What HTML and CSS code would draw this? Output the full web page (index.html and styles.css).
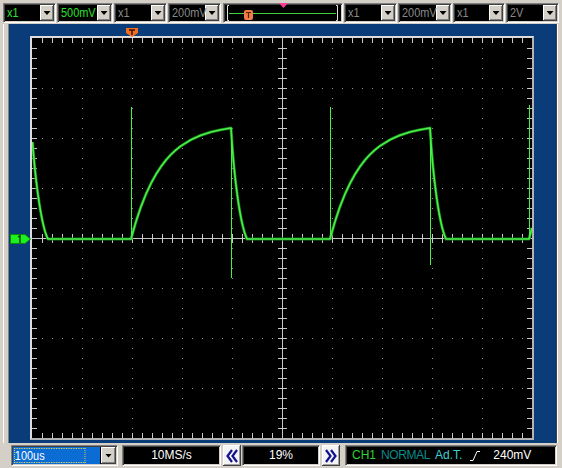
FILE: index.html
```html
<!DOCTYPE html>
<html lang="en">
<head>
    <meta charset="UTF-8">
    <title>Scope</title>
    <link rel="stylesheet" href="styles.css">
</head>
<body>
<div class="app">
    <div class="toolbar">
        <div class="combo w53"><span class="field on"><span>x1</span></span><span class="drop"></span></div>
        <div class="combo w55"><span class="field on"><span>500mV</span></span><span class="drop"></span></div>
        <div class="combo w53"><span class="field"><span>x1</span></span><span class="drop"></span></div>
        <div class="combo w53"><span class="field"><span>200mV</span></span><span class="drop"></span></div>

        <div class="trigbar">
            <svg width="118" height="18" viewBox="0 0 118 18">
                <path d="M5 1.5H3.5V16.5H5" fill="none" stroke="#e0e0e0"/>
                <path d="M112 1.5H113.5V16.5H112" fill="none" stroke="#e0e0e0"/>
                <path d="M5 9.5H112" stroke="#3fd23f"/>
                <rect x="20" y="6" width="9" height="10" rx="2" fill="#f07a48"/>
                <path d="M22 8.5H27M24.5 8.5V14" stroke="#5a2008" stroke-width="1.2"/>
                <polygon points="55,-1 64,-1 59.5,4" fill="#ff3c9c"/>
            </svg>
        </div>

        <div class="combo w53"><span class="field"><span>x1</span></span><span class="drop"></span></div>
        <div class="combo w54"><span class="field"><span>200mV</span></span><span class="drop"></span></div>
        <div class="combo w52"><span class="field"><span>x1</span></span><span class="drop"></span></div>
        <div class="combo w53"><span class="field"><span>2V</span></span><span class="drop"></span></div>
    </div>

    <div class="middle">
        <div class="gutter"></div>
        <div class="scope">
            <!-- trigger time marker -->
            <svg class="t-mark" width="12" height="9" viewBox="0 0 12 9">
                <polygon points="0,0 12,0 12,5 6,9 0,5" fill="#f07020"/>
                <path d="M3 2H9M6 2V7" stroke="#401000" stroke-width="1.5"/>
            </svg>
            <!-- channel 1 level marker -->
            <svg class="ch-mark" width="21" height="10" viewBox="0 0 21 10">
                <polygon points="0.5,0.5 15,0.5 20.5,5 15,9.5 0.5,9.5" fill="#1ef01e" stroke="#0a8a0a"/>
                <path d="M8 3L10 1.8V9" fill="none" stroke="#063806" stroke-width="1.4"/>
            </svg>

            <div class="screen">
                <svg width="500" height="400" viewBox="0 0 500 400">
                    <g stroke="#9a9a9a" stroke-width="1" stroke-dasharray="1 9">
                        <path d="M50.5 10V391M100.5 10V391M150.5 10V391M200.5 10V391M300.5 10V391M350.5 10V391M400.5 10V391M450.5 10V391"/>
                        <path d="M10 50.5H491M10 100.5H491M10 150.5H491M10 250.5H491M10 300.5H491M10 350.5H491"/>
                    </g>
                    <g stroke="#c8c8c8">
                        <path d="M0 200.5H500M250.5 0V400" stroke-width="1"/>
                        <g stroke-dasharray="1 9">
                            <path d="M10 200.5H491" stroke-width="9"/>
                            <path d="M250.5 10V391" stroke-width="9"/>
                            <path d="M10 2.5H491M10 397.5H491" stroke-width="5"/>
                            <path d="M2.5 10V391M497.5 10V391" stroke-width="5"/>
                        </g>
                    </g>
                    <g fill="none" stroke-linejoin="round">
                        <path class="trace-glow" d="M0.5 104C4 150 10 190 16 201H99L104 183.5 109 168.6 114 156 119 145.3 124 136.3 129 128.6 134 122 139 116.5 144 111.9 149 107.9 159 101.7 169 97.2 179 94 189 91.7 199 90C202 140 208 186 215 201H298L303 183.5 308 168.6 313 156 318 145.3 323 136.3 328 128.6 333 122 338 116.5 343 111.9 348 107.9 358 101.7 368 97.2 378 94 388 91.7 398 90C401 140 407 186 414 201H497L500 190"/>
                        <path class="trace" d="M0.5 104C4 150 10 190 16 201H99L104 183.5 109 168.6 114 156 119 145.3 124 136.3 129 128.6 134 122 139 116.5 144 111.9 149 107.9 159 101.7 169 97.2 179 94 189 91.7 199 90C202 140 208 186 215 201H298L303 183.5 308 168.6 313 156 318 145.3 323 136.3 328 128.6 333 122 338 116.5 343 111.9 348 107.9 358 101.7 368 97.2 378 94 388 91.7 398 90C401 140 407 186 414 201H497L500 190"/>
                        <path class="spike" d="M99.5 201V69M298.5 201V69M497.5 201V67M199.5 90V240M398.5 90V227"/>
                    </g>
                </svg>
            </div>
        </div>
        <div class="rgutter"></div>
    </div>

    <div class="bottombar">
        <div class="combo w107"><span class="field sel"><span class="focus">100us</span></span><span class="drop"></span></div>
        <div class="box w99 center">10MS/s</div>
        <div class="navbtn">
            <svg width="12" height="14" viewBox="0 0 12 14">
                <path d="M6 1L1.5 7 6 13M11 1L6.5 7 11 13" fill="none" stroke="#12128c" stroke-width="2.2"/>
            </svg>
        </div>
        <div class="box w78 center">19%</div>
        <div class="navbtn">
            <svg width="12" height="14" viewBox="0 0 12 14">
                <path d="M1 1L5.5 7 1 13M6 1L10.5 7 6 13" fill="none" stroke="#12128c" stroke-width="2.2"/>
            </svg>
        </div>
        <div class="box status">
            <span class="ch">CH1</span>
            <span class="mode">NORMAL</span>
            <span class="adt">Ad.T.</span>
            <svg class="edge" width="11" height="11" viewBox="0 0 11 11">
                <path d="M0 10.5H3L7 1.5H10" fill="none" stroke="#fff"/>
            </svg>
            <span class="level">240mV</span>
        </div>
    </div>
</div>
</body>
</html>
```

FILE: styles.css
```css
:root {
    --face: #d4d0c8;
    --navy: #0a3c7a;
    --green: #2ee02e;
    --dim: #8a8a8a;
}
body {
    margin: 0;
    background: var(--face);
    font-family: 'Liberation Sans', Arial, sans-serif;
    font-size: 12px;
}
.app {
    width: 562px;
    height: 468px;
    display: flex;
    flex-direction: column;
    overflow: hidden;
}

/* top row of selectors */
.toolbar {
    height: 24px;
    box-sizing: border-box;
    padding: 3px 0 0 3px;
    display: flex;
    gap: 1px;
}
.combo, .trigbar, .box {
    height: 20px;
    box-sizing: border-box;
    border: 1px solid;
    border-color: #808080 #fff #fff #808080;
    box-shadow: inset 1px 1px #404040, inset -1px -1px var(--face);
    background: #000;
}
.combo {
    display: flex;
    padding: 1px;
}
.w52 { width: 52px; }
.w53 { width: 53px; }
.w54 { width: 54px; }
.w55 { width: 56px; }
.w78 { width: 78px; }
.w99 { width: 99px; }
.w107 { width: 107px; }
.field {
    flex: 1;
    min-width: 0;
    color: var(--dim);
    padding-left: 2px;
    line-height: 16px;
    white-space: nowrap;
}
.field > span {
    display: inline-block;
    font-size: 13px;
    transform: scaleX(0.84);
    transform-origin: left center;
}
.field.on {
    color: var(--green);
}
.drop {
    width: 14px;
    height: 16px;
    flex: none;
    background: var(--face);
    box-shadow: inset -1px -1px #404040, inset 1px 1px #fff, inset -2px -2px #808080;
    display: flex;
    align-items: center;
    justify-content: center;
}
.drop::after {
    content: "";
    width: 7px;
    height: 4px;
    background: #000;
    clip-path: polygon(0 0, 100% 0, 50% 100%);
}
.trigbar {
    width: 120px;
    margin-left: 1px;
}
.trigbar svg {
    display: block;
    overflow: visible;
}

/* scope area */
.middle {
    height: 419px;
    display: flex;
}
.gutter {
    width: 9px;
    background: linear-gradient(to right, var(--face) 3px, #fff 3px 4px, var(--face) 4px 8px, #808080 8px);
}
.rgutter {
    width: 6px;
    background: linear-gradient(to right, #404040 1px, #fff 1px 2px, var(--face) 2px);
}
.scope {
    width: 547px;
    box-sizing: border-box;
    padding: 12px 0 0 21px;
    background: var(--navy);
    position: relative;
}
.screen {
    width: 500px;
    height: 400px;
    border: 2px solid;
    border-color: #dcdcdc #b4b4b4 #b4b4b4 #dcdcdc;
    background: #000;
}
.screen svg {
    display: block;
}
.trace-glow {
    stroke: #137a13;
    stroke-width: 3;
}
.trace {
    stroke: #4cee4c;
    stroke-width: 1.6;
}
.spike {
    stroke: #44f044;
    stroke-width: 1;
}
.t-mark {
    position: absolute;
    left: 117px;
    top: 4px;
}
.ch-mark {
    position: absolute;
    left: 1px;
    top: 210px;
}

/* bottom row */
.bottombar {
    height: 25px;
    box-sizing: border-box;
    padding: 2px 0 0 11px;
    display: flex;
    align-items: flex-start;
}
.bottombar .combo, .bottombar .box {
    height: 21px;
}
.bottombar .drop {
    width: 15px;
    height: 17px;
}
.field.sel {
    background: #0b6cd4;
    color: #fff;
    padding: 1px;
    margin-right: 1px;
    display: flex;
}
.focus {
    flex: 1;
    outline: 1px dotted #f0e060;
    outline-offset: -1px;
    padding-left: 1px;
    line-height: 15px;
}
.box {
    color: #fff;
    line-height: 19px;
    white-space: nowrap;
}
.center {
    text-align: center;
}
.bottombar .w99 {
    margin-left: 4px;
}
.navbtn {
    width: 18px;
    height: 21px;
    box-sizing: border-box;
    margin: 0 1px 0 2px;
    background: #f4f4f4;
    box-shadow: inset -1px -1px #404040, inset 1px 1px #fff, inset -2px -2px #a0a0a0;
    display: flex;
    align-items: center;
    justify-content: center;
}
.status {
    width: 212px;
    margin-left: 4px;
    display: flex;
    align-items: center;
    padding-left: 6px;
}
.ch { color: #2ed22e; }
.mode { color: #0a8a8a; margin-left: 5px; letter-spacing: -0.4px; }
.adt { color: #3cd2d2; margin-left: 5px; }
.edge { margin-left: 8px; }
.level { margin-left: 12px; }
```
